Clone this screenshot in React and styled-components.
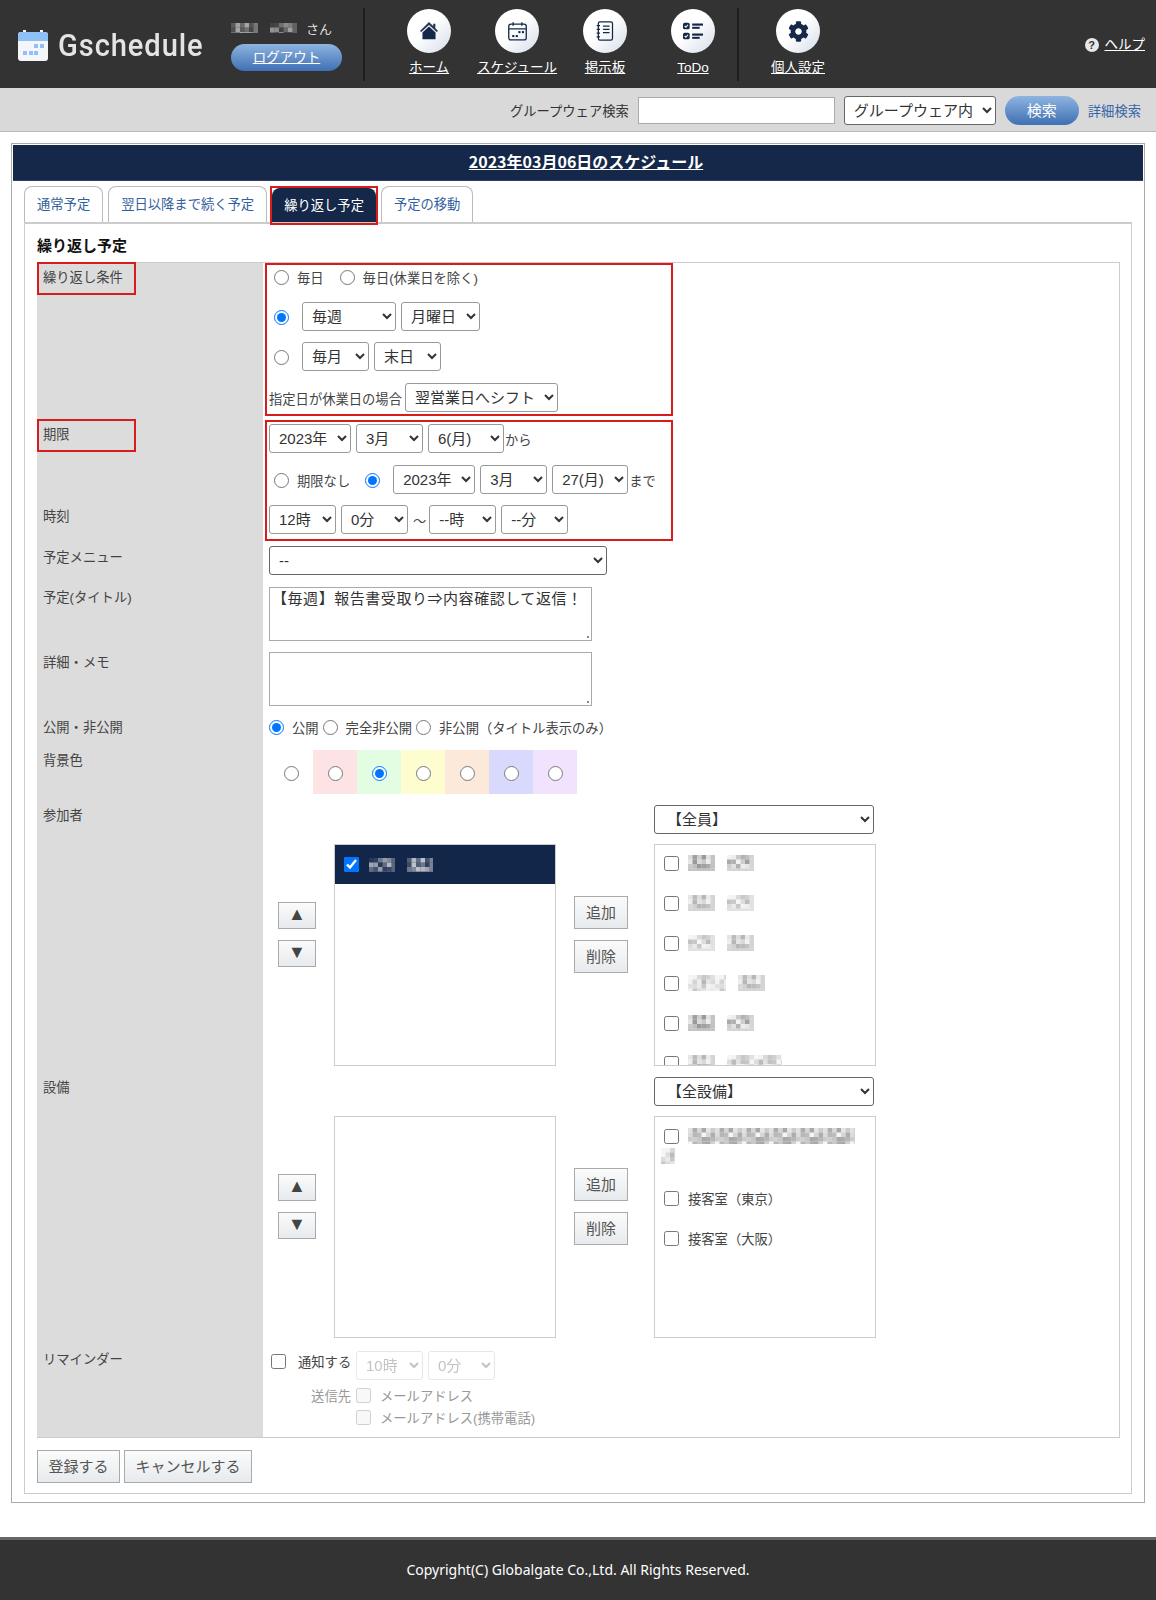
import React from 'react';
import styled, { createGlobalStyle } from 'styled-components';
import { FaCog } from 'react-icons/fa';

const JP = `"Liberation Sans", "Noto Sans CJK JP", sans-serif`;

const Global = createGlobalStyle`
  html, body { margin: 0; padding: 0; background: #fff; }
  body { font-family: ${JP}; font-size: 13.3px; color: #444; }
  * { box-sizing: border-box; }
`;

const Page = styled.div`width: 1156px; height: 1600px; display: flex; flex-direction: column;`;

/* header */
const Header = styled.header`height: 88px; background: #333; display: flex; align-items: stretch; flex: none; color: #fff;`;
const Logo = styled.div`width: 231px; padding: 30px 0 0 18px; display: flex; gap: 10px; flex: none;`;
const LogoText = styled.span`
  font-family: "Roboto", sans-serif; font-size: 32px; line-height: 30px; color: #e4e4e4; letter-spacing: 1px; font-weight: 500;
  display: inline-block; transform: scaleX(0.91); transform-origin: left center; white-space: nowrap; height: 30px;
`;
const UserBox = styled.div`width: 111px; flex: none; padding-top: 18px;`;
const UserLine = styled.div`height: 20px; display: flex; align-items: center; gap: 9px; color: #ddd; font-size: 13px;`;
const Pill = styled.a`
  display: flex; align-items: center; justify-content: center; border-radius: 14px;
  background: linear-gradient(#8eb4e0, #3f70b4); color: #fff; text-decoration: underline;
  font-size: 13.5px; height: 27px; margin-top: 6px; width: 111px; padding-bottom: 3px;
`;
const Sep = styled.div`width: 2px; height: 73px; margin: 8px 0 0 ${p => p.$ml || 0}px; background: #1e1e1e; flex: none;`;
const Nav = styled.nav`display: flex; margin-left: ${p => p.$ml}px;`;
const NavItem = styled.a`width: 88px; display: flex; flex-direction: column; align-items: center; padding-top: 9px; color: #fff; font-size: 13.5px; text-decoration: underline; line-height: 20px;`;
const Circle = styled.span`
  width: 44px; height: 44px; border-radius: 50%; display: flex; align-items: center; justify-content: center;
  background: linear-gradient(135deg, #fff 45%, #d5dde8); margin-bottom: 5px; color: #152849;
`;
const Help = styled.div`margin-left: auto; padding: 35px 11px 0 0; display: flex; gap: 6px; height: 20px; align-items: flex-start; font-size: 13.5px; line-height: 20px;`;
const HelpLink = styled.a`color: #fff; text-decoration: underline;`;
const HelpDot = styled.span`width: 14px; height: 14px; margin-top: 3px; border-radius: 50%; background: #e8e8e8; color: #333; font-size: 11px; line-height: 14px; text-align: center; font-weight: bold;`;

/* search */
const SearchBar = styled.div`
  height: 44px; flex: none; background: #d9d9d9; border-bottom: 1px solid #bbb; display: flex; align-items: center;
  justify-content: flex-end; padding: 2px 15px 0 0; font-size: 13.3px; color: #333;
`;
const SearchInput = styled.input`width: 197px; height: 27px; margin: 0 9px; border: 1px solid #aaa; background: #fff;`;
const PillButton = styled.button`
  width: 74px; height: 29px; margin: 0 9px; border: 0; border-radius: 15px; color: #fff; font-family: ${JP}; font-size: 15px;
  background: linear-gradient(#8eb4e0, #3f70b4); padding: 0 0 3px;
`;
const AdvLink = styled.a`color: #3566a8; font-size: 13.3px; margin-top: -1px;`;

/* selects */
const Select = styled.select`
  width: ${p => p.$w}px; height: 29px; font-family: ${JP}; font-size: 15px; color: ${p => p.disabled ? '#aaa' : '#333'};
  background: #fff; border: 1px solid ${p => p.$dark ? '#666' : p.disabled ? '#ddd' : '#999'}; border-radius: 3px;
  padding: 0 0 0 ${p => p.$pl ?? 5}px; margin: 0 0 1px; flex: none;
`;

/* main */
const Outer = styled.main`margin: 11px 11px 0; height: 1360px; border: 1px solid #aaa; padding: 1px; flex: none;`;
const TitleBar = styled.h1`
  height: 36px; margin: 0; padding-left: 16px; background: #152849; color: #fff; font-size: 16px; font-weight: bold; line-height: 33px; text-align: center;
  text-decoration: underline; border-bottom: 1px solid #2d4060; font-family: "Noto Sans CJK JP", sans-serif;
`;
const Tabs = styled.div`display: flex; gap: 5px; margin: 5px 0 0 11px; height: 36px; align-items: flex-end;`;
const Tab = styled.a`
  position: relative; height: ${p => p.$active ? 34 : 36}px; padding: 0 ${p => p.$active ? 11 : 12}px 2px; display: flex; align-items: center; font-size: 13.3px;
  border: 1px solid ${p => p.$active ? '#152849' : '#bbb'}; border-bottom: 0; border-radius: 8px 8px 0 0;
  color: ${p => p.$active ? '#fff' : '#33609e'}; background: ${p => p.$active ? '#152849' : '#fff'};
  ${p => p.$active && `&::after { content: ''; position: absolute; inset: -3px; border: 2px solid #d81c1c; }`}
`;
const Panel = styled.section`margin-left: 11px; width: 1108px; height: 1272px; border: 2px solid #ccc; border-width: 2px 1px 1px 1px; padding: 0 12px;`;
const Heading = styled.h2`margin: 13px 0 0; height: 25px; font-size: 15px; line-height: 18px; color: #111; font-weight: bold;`;
const Table = styled.div`position: relative; border: 1px solid #ccc; border-left: 0; width: 1083px;`;
const Row = styled.div`display: grid; grid-template-columns: 226px 1fr; height: ${p => p.$h}px;`;
const Label = styled.div`background: #dcdcdc; padding: ${p => p.$pt ?? 8}px 0 0 6px; line-height: 18px; color: #444;`;
const Value = styled.div`padding: ${p => p.$pt ?? 5}px 0 0 ${p => p.$pl ?? 6}px; display: flex; flex-direction: column;`;
const Line = styled.div`display: flex; align-items: center; height: ${p => p.$h || 30}px; margin-top: ${p => p.$mt || 0}px; margin-left: ${p => p.$ml || 0}px;`;
const Radio = styled.input.attrs({ type: 'radio' })`
  width: 15px; height: 15px; margin: 0 ${p => p.$gap ?? 8}px 0 ${p => p.$ml ?? 0}px; flex: none; accent-color: #0075ff;
`;
const Check = styled.input.attrs({ type: 'checkbox' })`width: 15px; height: 15px; margin: 0 ${p => p.$gap ?? 9}px 0 0; flex: none; accent-color: #0075ff;`;
const Text = styled.span`margin-right: ${p => p.$mr || 0}px; margin-left: ${p => p.$ml || 0}px; white-space: nowrap; color: ${p => p.$muted ? '#999' : '#444'};`;
const SelectGroup = styled.div`display: flex; gap: 5px; margin-left: ${p => p.$ml || 0}px;`;
const TextArea = styled.textarea`
  width: 323px; height: 54px; border: 1px solid #aaa; font-family: ${JP}; font-size: 15px; line-height: 20px; padding: 1px 2px; margin: 0; color: #333;
  display: block; letter-spacing: 0.55px; resize: none;
  background: linear-gradient(#888, #888) no-repeat right 2px bottom 2px / 2px 2px, #fff;
`;
const Swatches = styled.div`display: flex; height: 44px;`;
const Swatch = styled.label`width: 44px; height: 44px; padding-top: 3px; display: flex; align-items: center; justify-content: center; background: ${p => p.$c};`;
const SwatchRadio = styled.input.attrs({ type: 'radio' })`width: 15px; height: 15px; margin: 0; accent-color: #0075ff;`;

/* transfer */
const Transfer = styled.div`display: flex; align-items: center; padding-left: 15px; height: 261px;`;
const Stack = styled.div`display: flex; flex-direction: column; gap: 11px; width: ${p => p.$w}px; flex: none; margin: 0 ${p => p.$mr}px 2px 0;`;
const Btn = styled.button`
  height: ${p => p.$h}px; width: ${p => p.$w ? p.$w + 'px' : '100%'}; padding: 0 0 2px; border: 1px solid #aaa; background: linear-gradient(#fbfbfb, #e7eaed);
  color: ${p => p.$arrow ? '#444' : '#555'}; font-family: ${JP}; font-size: ${p => p.$fs || 15}px; border-radius: 0; margin: 0;
`;
const ListBox = styled.div`width: 222px; height: 222px; border: 1px solid #ccc; overflow: hidden; background: #fff; flex: none;`;
const LeftList = styled(ListBox)`align-self: flex-end; margin-right: 18px;`;
const RightCol = styled.div`width: 222px; display: flex; flex-direction: column; gap: 9px; flex: none;`;
const SelectedItem = styled.div`height: 39px; background: #12264a; display: flex; align-items: center; padding-left: 9px; gap: 10px;`;
const ListRow = styled.div`height: 40px; display: flex; align-items: center; padding-left: 9px; color: #444; &:first-child { margin-top: -2px; }`;
const WrapRow = styled.div`padding: 11px 0 0 9px; height: 61px;`;
const WrapLine = styled.div`display: flex; align-items: center; height: ${p => p.$h}px; margin-left: ${p => p.$ml || 0}px;`;

/* reminder */
const RemLine = styled.div`display: grid; grid-template-columns: 87px auto; align-items: ${p => p.$top ? 'start' : 'center'}; height: ${p => p.$h}px;`;
const RemLabel = styled.div`display: flex; align-items: center; padding-left: 2px; color: #444; height: 20px;`;
const RemRight = styled.div`text-align: right; padding-right: 5px; color: #999;`;
const RemGap = styled.div`height: 3px;`;
const Actions = styled.div`display: flex; gap: 4px; margin-top: 12px;`;

/* annotation */
const Mark = styled.div`
  position: absolute; left: ${p => p.$x}px; top: ${p => p.$y}px; width: ${p => p.$w}px; height: ${p => p.$h}px;
  border: 2px solid #d81c1c; pointer-events: none;
`;

const Footer = styled.footer`
  margin-top: 34px; flex: 1; background: #333; border-top: 3px solid #666; color: #fff; font-family: "Noto Sans", sans-serif;
  font-size: 14px; display: flex; align-items: center; justify-content: center; padding-bottom: 2px;
`;

const BlurSvg = styled.svg`display: block; flex: none; filter: blur(0.6px);`;
const shades = [0.55, 0.2, 0.8, 0.35, 0.1, 0.65, 0.45, 0.25, 0.7, 0.15, 0.5, 0.3, 0.85, 0.4];
function Blur({ w, h, color = '#777', seed = 0, cell = 4.5 }) {
  const rects = [];
  let n = seed * 7 + 3;
  for (let y = 0; y < h; y += cell) {
    for (let x = 0; x < w; x += cell) {
      n = (n * 5 + 3 + Math.floor(y)) % shades.length;
      rects.push(<rect key={`${x}-${y}`} x={x} y={y} width={cell} height={cell} fill={color} opacity={shades[n]} />);
    }
  }
  return <BlurSvg width={w} height={h}>{rects}</BlurSvg>;
}
const Name = styled.span`display: flex; gap: ${p => p.$gap ?? 12}px;`;
function Person({ a = 27, b = 27, seed, color, h = 16 }) {
  return <Name><Blur w={a} h={h} seed={seed} color={color} /><Blur w={b} h={h} seed={seed + 1} color={color} /></Name>;
}

const LogoIcon = () => (
  <svg width="30" height="31" viewBox="0 0 30 31">
    <rect x="0" y="2" width="30" height="29" rx="3" fill="#f4f6f9" />
    <rect x="5" y="0" width="3" height="4" fill="#f4f6f9" /><rect x="22" y="0" width="3" height="4" fill="#f4f6f9" />
    <path d="M0 5a3 3 0 0 1 3-3h24a3 3 0 0 1 3 3v6H0z" fill="#8fc0f7" />
    <g fill="#8fc0f7"><rect x="16" y="14" width="4" height="4" /><rect x="22" y="14" width="4" height="4" /><rect x="5" y="21" width="4" height="4" /><rect x="11" y="21" width="4" height="4" /><rect x="16" y="21" width="4" height="4" /></g>
  </svg>
);
const HomeIcon = () => (
  <svg width="20" height="20" viewBox="0 0 22 22"><path d="M11 1 1 11l1.6 1L11 4.5 19.4 12l1.6-1-3-3V3h-2.4v2.6z" fill="#2b3a55" /><path d="M3.8 12.6 11 6l7.2 6.6V20H3.8z" fill="#152849" /></svg>
);
const CalIcon = () => (
  <svg width="21" height="21" viewBox="0 0 24 24" fill="none" stroke="#152849" strokeWidth="1.5"><rect x="2" y="3.5" width="20" height="18" rx="2.5" /><path d="M2 9h20M7 1.5v4M17 1.5v4" /><g fill="#152849" stroke="none"><rect x="13" y="11.5" width="2.4" height="2.4" /><rect x="17" y="11.5" width="2.4" height="2.4" /><rect x="6" y="16" width="2.4" height="2.4" /><rect x="10" y="16" width="2.4" height="2.4" /></g></svg>
);
const BookIcon = () => (
  <svg width="20" height="22" viewBox="0 0 24 26" fill="none" stroke="#152849" strokeWidth="1.5"><rect x="4" y="2" width="17" height="22" rx="2" /><path d="M2 6.5h4M2 11h4M2 15.5h4M2 20h4M9.5 7h8M9.5 11h8M9.5 15h8" /></svg>
);
const TodoIcon = () => (
  <svg width="22" height="20" viewBox="0 0 26 24"><g fill="#152849"><rect x="1" y="2" width="8" height="8" rx="2" /><rect x="1" y="14" width="8" height="8" rx="2" /><rect x="12" y="3" width="13" height="2.6" /><rect x="12" y="7" width="9" height="2.4" /><rect x="12" y="15" width="13" height="2.6" /><rect x="12" y="19" width="9" height="2.4" /></g><path d="M3 6l1.5 1.5L7 4.5M3 18l1.5 1.5L7 16.5" stroke="#fff" strokeWidth="1.3" fill="none" /></svg>
);

const Sel = ({ w, pl, dark, disabled, children }) => (
  <Select $w={w} $pl={pl} $dark={dark} disabled={disabled}><option>{children}</option></Select>
);

function Participants({ heading, equipment }) {
  return (
    <Transfer>
      <Stack $w={38} $mr={18}><Btn $h={27} $fs={18} $arrow>▲</Btn><Btn $h={27} $fs={18} $arrow>▼</Btn></Stack>
      <LeftList>
        {!equipment && (
          <SelectedItem><Check defaultChecked $gap={0} /><Person a={26} b={26} seed={2} color="#ddd" h={14} /></SelectedItem>
        )}
      </LeftList>
      <Stack $w={54} $mr={26}><Btn $h={33}>追加</Btn><Btn $h={33}>削除</Btn></Stack>
      <RightCol>
        <Sel w={220} pl={8} dark>{heading}</Sel>
        <ListBox>
          {equipment ? (
            <>
              <WrapRow>
                <WrapLine $h={16}><Check /><Blur w={167} h={16} seed={5} color="#999" /></WrapLine>
                <WrapLine $h={24} $ml={-3}><Blur w={14} h={16} seed={8} color="#aaa" /></WrapLine>
              </WrapRow>
              <ListRow><Check /><Text>接客室（東京）</Text></ListRow>
              <ListRow><Check /><Text>接客室（大阪）</Text></ListRow>
            </>
          ) : (
            [[27, 27, 1, '#888'], [27, 27, 3, '#aaa'], [27, 27, 4, '#aaa'], [38, 27, 6, '#aaa'], [27, 27, 7, '#888'], [27, 55, 9, '#aaa']].map(([a, b, s, c]) => (
              <ListRow key={s}><Check /><Person a={a} b={b} seed={s} color={c} /></ListRow>
            ))
          )}
        </ListBox>
      </RightCol>
    </Transfer>
  );
}

export default function App() {
  return (
    <Page>
      <Global />
      <Header>
        <Logo><LogoIcon /><LogoText>Gschedule</LogoText></Logo>
        <UserBox>
          <UserLine><Person a={27} b={27} seed={1} color="#bbb" h={10} /><span>さん</span></UserLine>
          <Pill>ログアウト</Pill>
        </UserBox>
        <Sep $ml={21} />
        <Nav $ml={20}>
          <NavItem><Circle><HomeIcon /></Circle>ホーム</NavItem>
          <NavItem><Circle><CalIcon /></Circle>スケジュール</NavItem>
          <NavItem><Circle><BookIcon /></Circle>掲示板</NavItem>
          <NavItem><Circle><TodoIcon /></Circle>ToDo</NavItem>
        </Nav>
        <Sep $ml={0} />
        <Nav $ml={15}>
          <NavItem><Circle><FaCog size={21} /></Circle>個人設定</NavItem>
        </Nav>
        <Help><HelpDot>?</HelpDot><HelpLink>ヘルプ</HelpLink></Help>
      </Header>

      <SearchBar>
        <span>グループウェア検索</span>
        <SearchInput />
        <Sel w={152} pl={5} dark>グループウェア内</Sel>
        <PillButton>検索</PillButton>
        <AdvLink>詳細検索</AdvLink>
      </SearchBar>

      <Outer>
        <TitleBar>2023年03月06日のスケジュール</TitleBar>
        <Tabs>
          <Tab>通常予定</Tab>
          <Tab>翌日以降まで続く予定</Tab>
          <Tab $active>繰り返し予定</Tab>
          <Tab>予定の移動</Tab>
        </Tabs>
        <Panel>
          <Heading>繰り返し予定</Heading>
          <Table>
            <Row $h={155}>
              <Label $pt={6}>繰り返し条件</Label>
              <Value $pt={2}>
                <Line $h={24} $ml={5}>
                  <Radio name="rep" $gap={8} /><Text $mr={16}>毎日</Text>
                  <Radio name="rep" /><Text>毎日(休業日を除く)</Text>
                </Line>
                <Line $mt={13} $ml={5}>
                  <Radio name="rep" defaultChecked $gap={13} />
                  <SelectGroup><Sel w={94} pl={5}>毎週</Sel><Sel w={79} pl={5}>月曜日</Sel></SelectGroup>
                </Line>
                <Line $mt={10} $ml={5}>
                  <Radio name="rep" $gap={13} />
                  <SelectGroup><Sel w={67} pl={5}>毎月</Sel><Sel w={67} pl={5}>末日</Sel></SelectGroup>
                </Line>
                <Line $mt={11}>
                  <Text $mr={3}>指定日が休業日の場合</Text><Sel w={153} pl={5}>翌営業日へシフト</Sel>
                </Line>
              </Value>
            </Row>
            <Row $h={82}>
              <Label>期限</Label>
              <Value $pt={6}>
                <Line>
                  <SelectGroup><Sel w={82}>2023年</Sel><Sel w={67}>3月</Sel><Sel w={76}>6(月)</Sel></SelectGroup>
                  <Text $ml={1}>から</Text>
                </Line>
                <Line $mt={11} $ml={5}>
                  <Radio name="lim" /><Text $mr={15}>期限なし</Text>
                  <Radio name="lim" defaultChecked $gap={13} />
                  <SelectGroup><Sel w={82}>2023年</Sel><Sel w={67}>3月</Sel><Sel w={76}>27(月)</Sel></SelectGroup>
                  <Text $ml={1}>まで</Text>
                </Line>
              </Value>
            </Row>
            <Row $h={41}>
              <Label>時刻</Label>
              <Value>
                <Line>
                  <SelectGroup><Sel w={67}>12時</Sel><Sel w={67}>0分</Sel></SelectGroup>
                  <Text $ml={5} $mr={3}>～</Text>
                  <SelectGroup><Sel w={67}>--時</Sel><Sel w={67}>--分</Sel></SelectGroup>
                </Line>
              </Value>
            </Row>
            <Row $h={41}>
              <Label>予定メニュー</Label>
              <Value><Sel w={338} dark>--</Sel></Value>
            </Row>
            <Row $h={65}>
              <Label $pt={7}>予定(タイトル)</Label>
              <Value><TextArea defaultValue="【毎週】報告書受取り⇒内容確認して返信！" /></Value>
            </Row>
            <Row $h={65}>
              <Label $pt={7}>詳細・メモ</Label>
              <Value><TextArea /></Value>
            </Row>
            <Row $h={32}>
              <Label $pt={7}>公開・非公開</Label>
              <Value $pt={3}>
                <Line $h={24}>
                  <Radio name="pub" defaultChecked /><Text $mr={4}>公開</Text>
                  <Radio name="pub" /><Text $mr={4}>完全非公開</Text>
                  <Radio name="pub" /><Text>非公開（タイトル表示のみ）</Text>
                </Line>
              </Value>
            </Row>
            <Row $h={55}>
              <Label>背景色</Label>
              <Value $pt={6}>
                <Swatches>
                  {['#fff', '#fde3e3', '#e3fde3', '#fdfdcf', '#fde9d9', '#d9d9fd', '#f1e3fd'].map((c, i) => (
                    <Swatch key={c} $c={c}><SwatchRadio name="bg" defaultChecked={i === 2} /></Swatch>
                  ))}
                </Swatches>
              </Value>
            </Row>
            <Row $h={272}>
              <Label>参加者</Label>
              <Value $pt={6} $pl={0}><Participants heading="【全員】" /></Value>
            </Row>
            <Row $h={272}>
              <Label>設備</Label>
              <Value $pt={6} $pl={0}><Participants heading="【全設備】" equipment /></Value>
            </Row>
            <Row $h={94}>
              <Label>リマインダー</Label>
              <Value $pt={8}>
                <RemLine $h={30} $top>
                  <RemLabel><Check $gap={12} /><span>通知する</span></RemLabel>
                  <SelectGroup><Sel w={67} disabled>10時</Sel><Sel w={67} disabled>0分</Sel></SelectGroup>
                </RemLine>
                <RemGap />
                <RemLine $h={22}>
                  <RemRight>送信先</RemRight>
                  <Line $h={22}><Check disabled /><Text $muted>メールアドレス</Text></Line>
                </RemLine>
                <RemLine $h={22}>
                  <span />
                  <Line $h={22}><Check disabled /><Text $muted>メールアドレス(携帯電話)</Text></Line>
                </RemLine>
              </Value>
            </Row>
            <Mark $x={0} $y={-1} $w={99} $h={33} />
            <Mark $x={0} $y={156} $w={99} $h={33} />
            <Mark $x={228} $y={0} $w={408} $h={153} />
            <Mark $x={228} $y={157} $w={408} $h={121} />
          </Table>
          <Actions>
            <Btn $h={33} $w={83}>登録する</Btn>
            <Btn $h={33} $w={128}>キャンセルする</Btn>
          </Actions>
        </Panel>
      </Outer>

      <Footer>Copyright(C) Globalgate Co.,Ltd. All Rights Reserved.</Footer>
    </Page>
  );
}
